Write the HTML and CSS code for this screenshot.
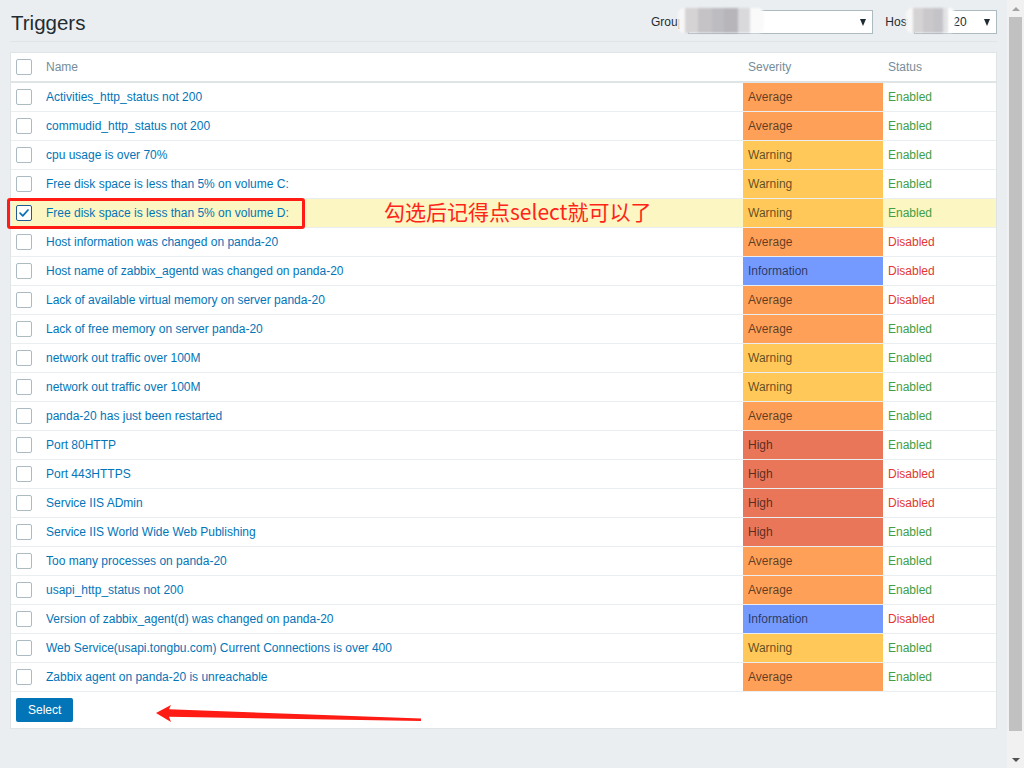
FILE: index.html
```html
<!DOCTYPE html>
<html lang="en">
<head>
<meta charset="utf-8">
<title>Triggers</title>
<link rel="stylesheet" href="styles.css">
</head>
<body>
<div class="screen">
  <main class="page">
    <header class="header">
      <h1 class="title">Triggers</h1>
      <div class="filters">
        <span class="flabel">Group</span>
        <div class="select sel-group"><span>Zabbix</span><i class="caret"></i></div>
        <span class="flabel host-label">Host</span>
        <div class="select sel-host"><span>panda-20</span><i class="caret"></i></div>
      </div>
      <div class="blur blur-group"></div>
      <div class="blur blur-host"></div>
    </header>

    <section class="panel">
      <table class="list">
        <colgroup>
          <col class="c-cb"><col class="c-name"><col class="c-sev"><col class="c-status">
        </colgroup>
        <thead>
          <tr><th><span class="cb"></span></th><th>Name</th><th>Severity</th><th>Status</th></tr>
        </thead>
        <tbody>
          <tr><td><span class="cb"></span></td><td><a>Activities_http_status not 200</a></td><td class="sev average">Average</td><td class="on">Enabled</td></tr>
          <tr><td><span class="cb"></span></td><td><a>commudid_http_status not 200</a></td><td class="sev average">Average</td><td class="on">Enabled</td></tr>
          <tr><td><span class="cb"></span></td><td><a>cpu usage is over 70%</a></td><td class="sev warning">Warning</td><td class="on">Enabled</td></tr>
          <tr><td><span class="cb"></span></td><td><a>Free disk space is less than 5% on volume C:</a></td><td class="sev warning">Warning</td><td class="on">Enabled</td></tr>
          <tr class="selected"><td><span class="cb checked"><svg viewBox="0 0 16 16" width="14" height="14"><path d="M3.5 8.2 L6.6 11.2 L12.6 4.6" fill="none" stroke="#0a6fb3" stroke-width="2" stroke-linecap="round" stroke-linejoin="round"/></svg></span></td><td><a>Free disk space is less than 5% on volume D:</a></td><td class="sev warning">Warning</td><td class="on">Enabled</td></tr>
          <tr><td><span class="cb"></span></td><td><a>Host information was changed on panda-20</a></td><td class="sev average">Average</td><td class="off">Disabled</td></tr>
          <tr><td><span class="cb"></span></td><td><a>Host name of zabbix_agentd was changed on panda-20</a></td><td class="sev info">Information</td><td class="off">Disabled</td></tr>
          <tr><td><span class="cb"></span></td><td><a>Lack of available virtual memory on server panda-20</a></td><td class="sev average">Average</td><td class="off">Disabled</td></tr>
          <tr><td><span class="cb"></span></td><td><a>Lack of free memory on server panda-20</a></td><td class="sev average">Average</td><td class="on">Enabled</td></tr>
          <tr><td><span class="cb"></span></td><td><a>network out traffic over 100M</a></td><td class="sev warning">Warning</td><td class="on">Enabled</td></tr>
          <tr><td><span class="cb"></span></td><td><a>network out traffic over 100M</a></td><td class="sev warning">Warning</td><td class="on">Enabled</td></tr>
          <tr><td><span class="cb"></span></td><td><a>panda-20 has just been restarted</a></td><td class="sev average">Average</td><td class="on">Enabled</td></tr>
          <tr><td><span class="cb"></span></td><td><a>Port 80HTTP</a></td><td class="sev high">High</td><td class="on">Enabled</td></tr>
          <tr><td><span class="cb"></span></td><td><a>Port 443HTTPS</a></td><td class="sev high">High</td><td class="off">Disabled</td></tr>
          <tr><td><span class="cb"></span></td><td><a>Service IIS ADmin</a></td><td class="sev high">High</td><td class="off">Disabled</td></tr>
          <tr><td><span class="cb"></span></td><td><a>Service IIS World Wide Web Publishing</a></td><td class="sev high">High</td><td class="on">Enabled</td></tr>
          <tr><td><span class="cb"></span></td><td><a>Too many processes on panda-20</a></td><td class="sev average">Average</td><td class="on">Enabled</td></tr>
          <tr><td><span class="cb"></span></td><td><a>usapi_http_status not 200</a></td><td class="sev average">Average</td><td class="on">Enabled</td></tr>
          <tr><td><span class="cb"></span></td><td><a>Version of zabbix_agent(d) was changed on panda-20</a></td><td class="sev info">Information</td><td class="off">Disabled</td></tr>
          <tr><td><span class="cb"></span></td><td><a>Web Service(usapi.tongbu.com) Current Connections is over 400</a></td><td class="sev warning">Warning</td><td class="on">Enabled</td></tr>
          <tr><td><span class="cb"></span></td><td><a>Zabbix agent on panda-20 is unreachable</a></td><td class="sev average">Average</td><td class="on">Enabled</td></tr>
        </tbody>
      </table>
      <div class="footer"><button class="btn" type="button">Select</button></div>
    </section>

    <div class="mark-box"></div>
    <div class="mark-text">勾选后记得点select就可以了</div>
    <svg class="mark-arrow" width="275" height="26" viewBox="0 0 275 26">
      <polygon points="6,13 21,5 19,9.3 271,18.6 271,21 19,16.8 21,22" fill="#ff1c14"/>
    </svg>
  </main>

  <div class="scrollbar">
    <div class="sb-btn"><i class="sb-up"></i></div>
    <div class="sb-track"><div class="sb-thumb"></div></div>
    <div class="sb-btn"><i class="sb-down"></i></div>
  </div>
</div>
</body>
</html>
```

FILE: styles.css
```css
html, body {
  margin: 0;
  height: 100%;
  overflow: hidden;
}

body {
  font-family: "Liberation Sans", Arial, sans-serif;
  font-size: 12px;
  color: #1f2c33;
  background: #ebeef0;
}

.screen {
  display: flex;
  height: 768px;
}

.page {
  flex: 1;
  min-width: 0;
  padding: 0 10px;
  position: relative;
}

/* header */
.header {
  position: relative;
  display: flex;
  align-items: flex-start;
  justify-content: space-between;
  height: 41px;
  border-bottom: 1px solid #dfe4e7;
  margin-bottom: 10px;
}

.title {
  margin: 11px 0 0 1px;
  font-size: 20.5px;
  line-height: 24px;
  font-weight: normal;
  color: #1f2c33;
}

.filters {
  display: flex;
  align-items: center;
  margin-top: 10px;
}

.flabel {
  margin-right: 4px;
  color: #1f2c33;
}

.host-label {
  margin-left: 12px;
}

.select {
  box-sizing: border-box;
  height: 24px;
  display: flex;
  align-items: center;
  justify-content: space-between;
  background: #fff;
  border: 1px solid #acbbc2;
  padding: 0 6px 0 4px;
  color: #1f2c33;
}

.sel-group { width: 185px; }
.sel-host { width: 83px; padding-left: 1px; }

.caret {
  width: 0;
  height: 0;
  border-left: 3.5px solid transparent;
  border-right: 3.5px solid transparent;
  border-top: 7px solid #1f2c33;
}

.blur {
  position: absolute;
  top: 8px;
  height: 25px;
  border-radius: 6px;
  filter: blur(1px);
}

.blur-group {
  left: 668px;
  width: 86px;
  background: linear-gradient(to right,
    #f6f6f7 0 7px, #d6d3d4 7px 20px, #c6c3c6 20px 34px, #bdbcc1 34px 46px,
    #b7b5ba 46px 60px, #d9d9dc 60px 72px, #fafafa 72px 86px);
}

.blur-host {
  left: 896px;
  width: 49px;
  background: linear-gradient(to right,
    #f7f7f8 0 7px, #d6d3d4 7px 17px, #cbc8cb 17px 27px, #c4c4c8 27px 37px,
    #e3e3e5 37px 42px, #ffffff 42px 49px);
}

/* panel / table */
.panel {
  background: #fff;
  border: 1px solid #dfe4e7;
}

.list {
  width: 100%;
  table-layout: fixed;
  border-collapse: separate;
  border-spacing: 0;
}

.c-cb { width: 30px; }
.c-sev { width: 140px; }
.c-status { width: 113px; }

.list th {
  height: 30px;
  box-sizing: border-box;
  padding: 0 5px;
  text-align: left;
  font-weight: normal;
  color: #768d99;
  border-bottom: 2px solid #dfe4e7;
  vertical-align: middle;
}

.list td {
  height: 29px;
  box-sizing: border-box;
  padding: 0 5px;
  border-bottom: 1px solid #ebeef0;
  vertical-align: middle;
  white-space: nowrap;
  overflow: hidden;
}

.list a {
  color: #0275b8;
  text-decoration: none;
}

.cb {
  display: block;
  box-sizing: border-box;
  width: 16px;
  height: 16px;
  border: 1px solid #acbbc2;
  border-radius: 2px;
  background: #fff;
}

.cb.checked {
  border-color: #1f5c94;
  display: flex;
  align-items: center;
  justify-content: center;
}

.selected td {
  background: #fbf6c2;
}

.list td.sev { color: rgba(0, 0, 0, 0.64); }
.list td.average { background: #ffa059; }
.list td.warning { background: #ffc859; }
.list td.high { background: #e97659; }
.list td.info { background: #7499ff; }

.on { color: #429e47; }
.off { color: #e33734; }

.footer {
  padding: 6px 5px 6px;
}

.btn {
  height: 24px;
  padding: 0 12px;
  border: none;
  border-radius: 2px;
  background: #0275b8;
  color: #fff;
  font-family: "Liberation Sans", Arial, sans-serif;
  font-size: 12px;
  display: block;
}

/* annotations */
.mark-box {
  position: absolute;
  left: 7px;
  top: 198px;
  width: 298px;
  height: 31px;
  box-sizing: border-box;
  border: 3px solid #ff1c14;
  border-radius: 3px;
}

.mark-text {
  position: absolute;
  left: 384px;
  top: 199px;
  font-family: "Noto Sans CJK SC", "Liberation Sans", sans-serif;
  font-size: 21px;
  line-height: 24px;
  color: #ff2418;
  white-space: nowrap;
}

.mark-arrow {
  position: absolute;
  left: 150px;
  top: 700px;
}

/* scrollbar */
.scrollbar {
  width: 17px;
  background: #f1f1f1;
  display: flex;
  flex-direction: column;
}

.sb-btn {
  height: 17px;
  display: flex;
  align-items: center;
  justify-content: center;
}

.sb-track {
  flex: 1;
  padding: 0 2px;
}

.sb-thumb {
  height: 714px;
  background: #c1c1c1;
}

.sb-up {
  width: 0; height: 0;
  border-left: 4px solid transparent;
  border-right: 4px solid transparent;
  border-bottom: 4px solid #a3a3a3;
}

.sb-down {
  width: 0; height: 0;
  border-left: 4px solid transparent;
  border-right: 4px solid transparent;
  border-top: 4px solid #505050;
}
```
